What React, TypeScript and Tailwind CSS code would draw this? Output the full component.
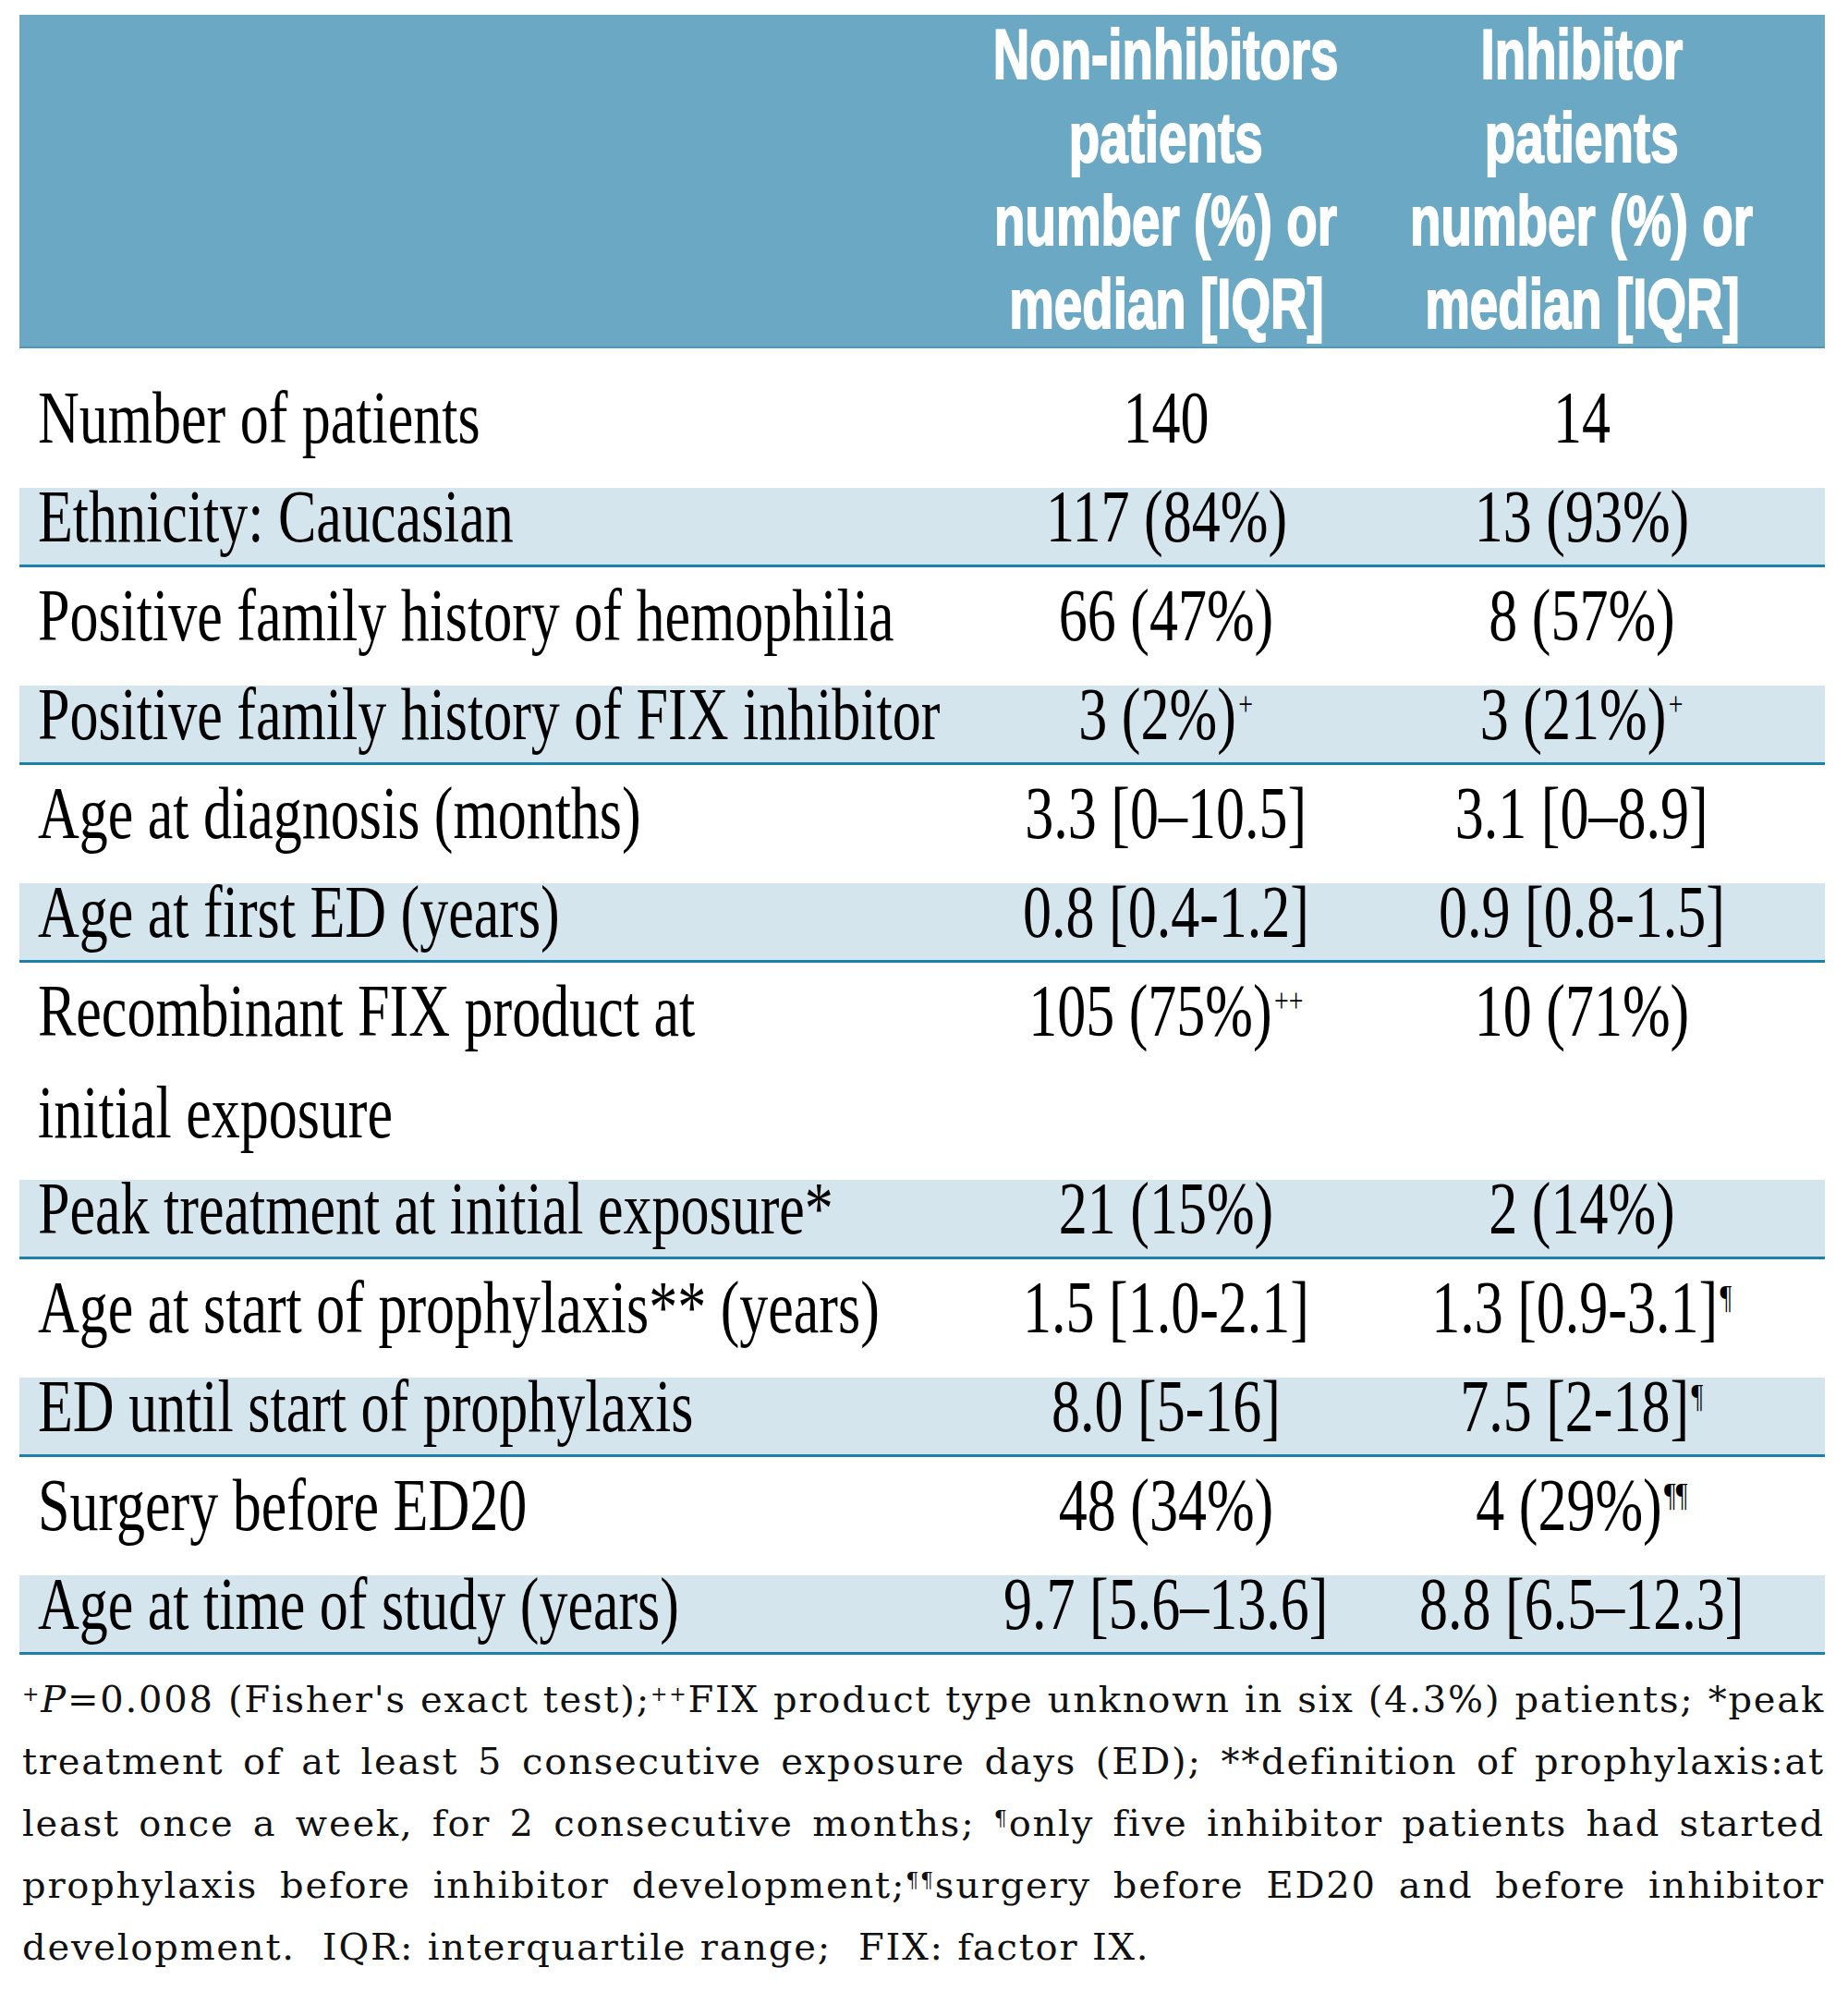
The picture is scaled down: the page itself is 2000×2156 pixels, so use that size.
type Row = {
  label: string[];
  a: string;
  aSup?: string;
  b: string;
  bSup?: string;
  band?: boolean;
};

const rows: Row[] = [
  { label: ['Number of patients'], a: '140', b: '14' },
  { label: ['Ethnicity: Caucasian'], a: '117 (84%)', b: '13 (93%)', band: true },
  { label: ['Positive family history of hemophilia'], a: '66 (47%)', b: '8 (57%)' },
  { label: ['Positive family history of FIX inhibitor'], a: '3 (2%)', aSup: '+', b: '3 (21%)', bSup: '+', band: true },
  { label: ['Age at diagnosis (months)'], a: '3.3 [0–10.5]', b: '3.1 [0–8.9]' },
  { label: ['Age at first ED (years)'], a: '0.8 [0.4-1.2]', b: '0.9 [0.8-1.5]', band: true },
  { label: ['Recombinant FIX product at', 'initial exposure'], a: '105 (75%)', aSup: '++', b: '10 (71%)' },
  { label: ['Peak treatment at initial exposure*'], a: '21 (15%)', b: '2 (14%)', band: true },
  { label: ['Age at start of prophylaxis** (years)'], a: '1.5 [1.0-2.1]', b: '1.3 [0.9-3.1]', bSup: '¶' },
  { label: ['ED until start of prophylaxis'], a: '8.0 [5-16]', b: '7.5 [2-18]', bSup: '¶', band: true },
  { label: ['Surgery before ED20'], a: '48 (34%)', b: '4 (29%)', bSup: '¶¶' },
  { label: ['Age at time of study (years)'], a: '9.7 [5.6–13.6]', b: '8.8 [6.5–12.3]', band: true },
];

const headCols = [
  ['Non-inhibitors', 'patients', 'number (%) or', 'median [IQR]'],
  ['Inhibitor', 'patients', 'number (%) or', 'median [IQR]'],
];

function Value({ text, sup }: { text: string; sup?: string }) {
  return (
    <div className="flex justify-center">
      <span className="whitespace-nowrap scale-x-[0.775]">
        {text}
        {sup && <span className="relative -top-[26px] text-[36px] leading-none ml-[3px]">{sup}</span>}
      </span>
    </div>
  );
}

function Sup({ children }: { children: string }) {
  return <span className="relative -top-[12px] text-[22px] leading-none">{children}</span>;
}

export default function App() {
  return (
    <div className="w-[2000px] h-[2156px] bg-white pt-[16px] pl-[21px] font-['Liberation_Serif',serif] text-black">
      <div className="w-[1954px]">
        {/* Header */}
        <div className="h-[361px] bg-[#6aa8c4] border-b-2 border-[#4f97b8] grid grid-cols-[1016px_450px_450px] font-['Liberation_Sans',Arial,sans-serif] font-bold text-white text-[76px] leading-[90px]">
          <div />
          {headCols.map((col, i) => (
            <div key={i} className="flex flex-col items-center -mt-[2px]">
              {col.map((line) => (
                <div key={line} className="whitespace-nowrap scale-x-[0.72] [-webkit-text-stroke:2px_white]">
                  {line}
                </div>
              ))}
            </div>
          ))}
        </div>

        {/* Rows */}
        <div className="mt-[23px] text-[80px] leading-[62px]">
          {rows.map((row, i) => (
            <div key={i} className="pt-[21px]">
              <div
                className={
                  'grid grid-cols-[1016px_450px_450px] ' +
                  (row.band
                    ? 'h-[86px] bg-[#d5e5ee] border-b-[3px] border-[#1c80aa]'
                    : row.label.length > 1
                      ? 'h-[193px]'
                      : 'h-[86px]')
                }
              >
                <div className="pl-[20px]">
                  {row.label.map((l, j) => (
                    <div key={j} className={j > 0 ? 'mt-[48px]' : ''}>
                      <span className="inline-block whitespace-nowrap origin-left scale-x-[0.775]">{l}</span>
                    </div>
                  ))}
                </div>
                <Value text={row.a} sup={row.aSup} />
                <Value text={row.b} sup={row.bSup} />
              </div>
            </div>
          ))}
        </div>

        {/* Footnote */}
        <div className="mt-[15px] pl-[3px] font-['DejaVu_Serif',serif] text-[40px] leading-[67px] tracking-[1.8px] text-[#111]">
          <div className="whitespace-nowrap text-justify [text-align-last:justify]">
            <Sup>+</Sup>
            <i>P</i>=0.008 (Fisher's exact test);<Sup>++</Sup>FIX product type unknown in six (4.3%) patients; *peak
          </div>
          <div className="whitespace-nowrap text-justify [text-align-last:justify]">
            treatment of at least 5 consecutive exposure days (ED); **definition of prophylaxis:at
          </div>
          <div className="whitespace-nowrap text-justify [text-align-last:justify]">
            least once a week, for 2 consecutive months; <Sup>¶</Sup>only five inhibitor patients had started
          </div>
          <div className="whitespace-nowrap text-justify [text-align-last:justify]">
            prophylaxis before inhibitor development;<Sup>¶¶</Sup>surgery before ED20 and before inhibitor
          </div>
          <div className="whitespace-nowrap">development.&nbsp; IQR: interquartile range;&nbsp; FIX: factor IX.</div>
        </div>
      </div>
    </div>
  );
}
